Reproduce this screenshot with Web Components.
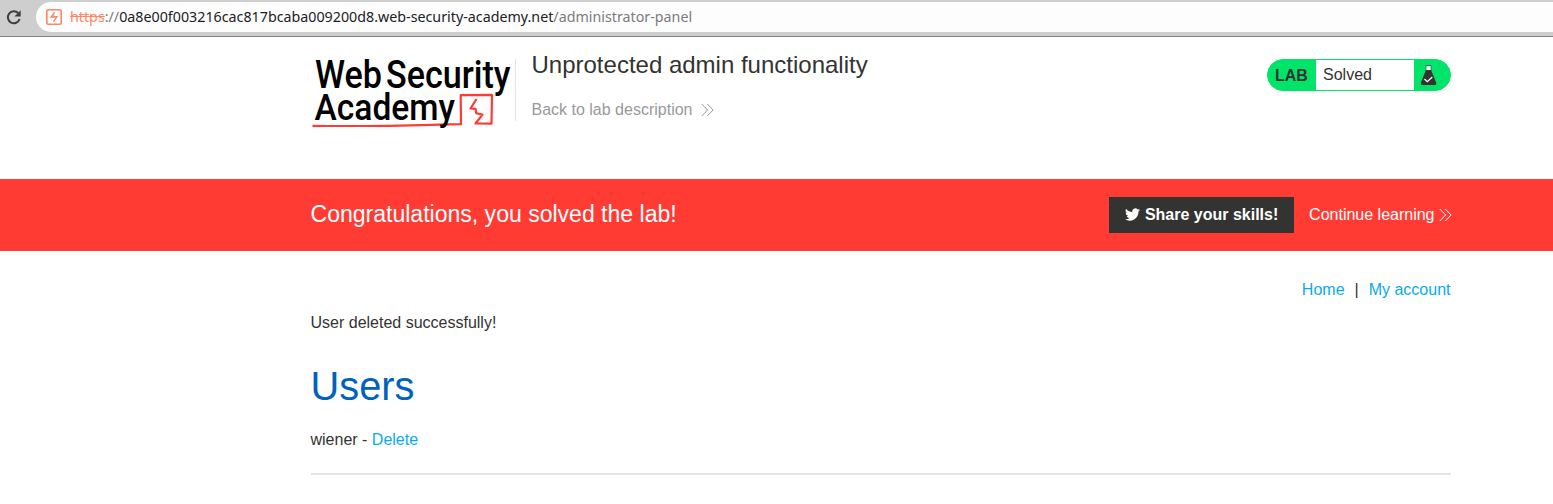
<!DOCTYPE html>
<html lang="en"><head><meta charset="utf-8"><title>Unprotected admin functionality</title>
<style>
html,body{margin:0;background:#fff}
body{font:16px/20px "Liberation Sans",Arial,sans-serif;color:#333332;height:504px;overflow:hidden}
</style></head><body>
<lab-page></lab-page>
<script>
const define=(name,html)=>{
  const t=document.createElement('template');t.innerHTML=html;
  customElements.define(name,class extends HTMLElement{
    constructor(){super();this.attachShadow({mode:'open'}).append(t.content.cloneNode(true));}
  });
};
define('double-chevron',`<style>:host{display:inline-block;width:13px;height:14px}svg{display:block}</style>
<svg width="13" height="14" viewBox="0 0 13 14" fill="none" stroke="currentColor" stroke-width="1"><path d="M.8 1 6.6 7 .8 13M6.3 1l5.8 6-5.8 6"/></svg>`);
define('address-bar',`<style>
:host{display:flex;height:36px;background:#cecece;border-bottom:1px solid #818181;font:14.28px/20px "Noto Sans",sans-serif;box-sizing:content-box}
.reload{display:block;width:18px;height:18px;margin:8px 13px 0 5px}
.field{flex:1;display:flex;align-items:center;height:30px;margin-top:2px;border-radius:15px 0 0 15px;background:#fdfdfd;padding-left:10px;color:#7b7b7b;white-space:pre}
.field svg{margin-right:8px;flex:none}
s{color:#ff8566}b{font-weight:400;color:#202124}
</style>
<svg class="reload" viewBox="0 0 18 18"><path d="M13.3 5.2A6 6 0 1 0 14.6 11" fill="none" stroke="#3c3f41" stroke-width="2"/><path d="M15.7 2.2v6.3H9.4z" fill="#3c3f41"/></svg>
<div class="field"><svg width="16" height="16" viewBox="0 0 16 16" fill="none" stroke="#ff8566"><rect x=".8" y=".8" width="14.4" height="14.4" rx="1.5" stroke-width="1.6"/><path d="M8.7 3.4 5.1 8h3.1M7.8 6.2v1.6h3.1L7.4 12.6" stroke-width="1.4"/></svg><span><s>https</s>://<b>0a8e00f003216cac817bcaba009200d8.web-security-academy.net</b>/administrator-panel</span></div>`);
define('academy-logo',`<style>:host{display:block;width:205px;height:80px}svg{display:block;overflow:visible}text{font-family:Roboto,sans-serif;font-weight:500;fill:#000}</style>
<svg width="205" height="80" viewBox="310 52 205 80">
<g font-size="38"><text x="315" y="87.7" textLength="67" lengthAdjust="spacingAndGlyphs">Web</text><text x="386" y="87.7" textLength="124.5" lengthAdjust="spacingAndGlyphs">Security</text></g>
<path d="M312.5 125.8Q335 126.2 390 125.8L461 124.2 460.7 95.2 492 94.8 491.5 123.7 475.5 123.5 482.5 114.6 476.2 113.2 475.5 108.8 470.5 108.5 476.5 99" fill="none" stroke="#ff3b34" stroke-width="2.2" stroke-linejoin="round"/>
<text x="314.5" y="119.8" font-size="37" textLength="140.5" lengthAdjust="spacingAndGlyphs">Academy</text>
</svg>`);
define('lab-status',`<style>
:host{display:flex;box-sizing:border-box;width:184px;height:32px;border:1px solid #00e569;border-radius:16px;background:#00e569;overflow:hidden;line-height:30px}
b{width:48px;padding-left:7px;box-sizing:border-box;line-height:32px}.state{width:98px;box-sizing:border-box;padding-left:7px;background:#fff}
svg{margin:5px 0 0 5.5px}
</style><b>LAB</b><span class="state"><slot></slot></span>
<svg width="17" height="20" viewBox="0 0 17 20"><path d="M5.5.5h6M6 1v5M11 1v5" stroke="#48725a" fill="none"/><path d="M6.5 1h4v4h-4z" fill="#fff"/><path d="M6 5h5l5.3 13q.4 2-1.5 2h-12.6Q.3 20 .7 18z" fill="#333332"/><path d="m4.5 14 2.8 2.6 5-4.6" fill="none" stroke="#fff" stroke-width="1.2"/></svg>`);
define('lab-header',`<style>
:host{display:flex;width:1140px;height:142px;margin-left:310.5px;align-items:flex-start}
academy-logo{margin:15px 0 0 -.5px}
.title{border-left:1px solid #e4e4e4;height:62px;margin-top:22px;padding-left:15.5px;flex:1}
h2{font-size:24px;line-height:28px;font-weight:400;margin:-8px 0 0}
a{display:flex;align-items:center;color:#999;margin-top:21px;line-height:20px}
double-chevron{margin-left:8.5px}
lab-status{margin:22px -.5px 0 0}
</style><academy-logo></academy-logo><div class="title"><h2>Unprotected admin functionality</h2><a>Back to lab description <double-chevron></double-chevron></a></div><lab-status>Solved</lab-status>`);
define('solved-banner',`<style>
:host{display:block;background:#ff3b34;height:72px;color:#fff}
div{display:flex;align-items:center;width:1141px;height:71px;margin-left:310.5px}
h4{font-size:23.04px;line-height:28px;font-weight:400;margin:-2px 0 0;flex:1}
button{font:bold 16px/20px "Liberation Sans",sans-serif;color:#fff;background:#333332;border:0;height:36px;width:185px;padding:0;display:flex;align-items:center;justify-content:center;margin-right:15px;white-space:nowrap}
svg{margin-right:5px}
a{display:flex;align-items:center}double-chevron{margin-left:4px}
</style><div><h4>Congratulations, you solved the lab!</h4>
<button><svg width="15" height="13" viewBox="0 0 24 20" fill="#fff"><path d="M24 2.6a10 10 0 0 1-2.8.8A5 5 0 0 0 23.3.7a10 10 0 0 1-3.1 1.2A4.9 4.9 0 0 0 11.8 6.4 14 14 0 0 1 1.7 1.2 4.9 4.9 0 0 0 3.2 7.8 5 5 0 0 1 1 7.2a4.9 4.9 0 0 0 3.9 4.9 5 5 0 0 1-2.2.1 4.9 4.9 0 0 0 4.6 3.4A9.9 9.9 0 0 1 0 17.6 14 14 0 0 0 21.5 5.2 10 10 0 0 0 24 2.6z"/></svg>Share your skills!</button><a>Continue learning<double-chevron></double-chevron></a></div>`);
define('user-panel',`<style>
:host{display:block;width:1140px;margin-left:310.5px}
nav{display:flex;justify-content:flex-end;padding-top:29px;gap:10px}
a{color:#09abe6}
p{margin:13px 0 0}
h1{font-size:39.8px;line-height:48px;font-weight:400;color:#0062bd;margin:29px 0 0}
.user{margin-top:20px}
hr{border:0;height:2px;background:#e4e4e4;margin:23px 0 0}
</style><nav><a>Home</a><span>|</span><a>My account</a></nav><p>User deleted successfully!</p><h1>Users</h1><p class="user">wiener - <a>Delete</a></p><hr>`);
define('lab-page',`<style>:host{display:block}</style><address-bar></address-bar><lab-header></lab-header><solved-banner></solved-banner><user-panel></user-panel>`);
</script></body></html>
